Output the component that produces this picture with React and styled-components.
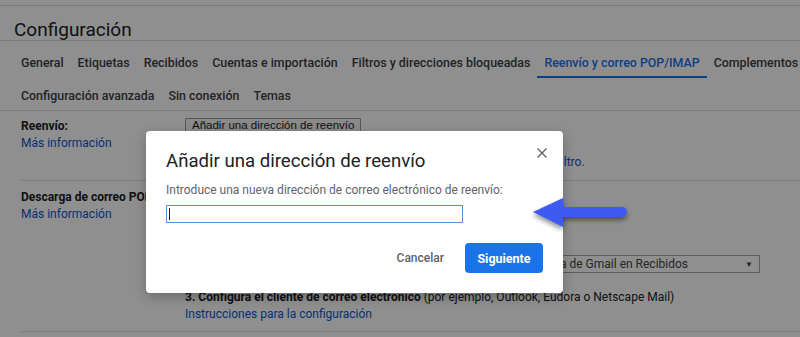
import React from "react";
import styled, { createGlobalStyle } from "styled-components";

const GlobalStyle = createGlobalStyle`
  html, body {
    margin: 0;
    padding: 0;
    background: #fff;
    overflow: hidden;
  }
  body {
    font-family: Roboto, "Liberation Sans", Arial, sans-serif;
    color: #202124;
    font-size: 12px;
  }
`;

const Page = styled.div`
  width: 800px;
  height: 337px;
  position: relative;
  overflow: hidden;
`;

const TopStrip = styled.div`
  height: 5px;
  border-bottom: 1px solid #dadce0;
`;

const Header = styled.h1`
  margin: 0;
  height: 35px;
  padding: 14px 0 0 14px;
  font-family: Roboto, sans-serif;
  font-size: 19px;
  font-weight: 400;
  line-height: 19px;
  color: #202124;
  border-bottom: 1px solid #dadce0;
  box-sizing: border-box;
`;

const TabBar = styled.nav`
  padding-left: 14px;
  border-bottom: 1px solid #dadce0;
`;

const TabRow = styled.div`
  display: flex;
  height: ${(p) => p.$height}px;
`;

const Tab = styled.a`
  box-sizing: border-box;
  padding: ${(p) => p.$top}px 7px 0;
  font-size: 12.4px;
  font-weight: 500;
  line-height: 16px;
  white-space: nowrap;
  color: ${(p) => (p.$active ? "#1a73e8" : "#3c4043")};
  border-bottom: 2px solid ${(p) => (p.$active ? "#1a73e8" : "transparent")};
  height: 100%;
`;

const Section = styled.div`
  display: grid;
  grid-template-columns: 164px 1fr;
  margin-left: 21px;
  height: ${(p) => p.$height}px;
  border-bottom: 1px solid #dadce0;
  box-sizing: border-box;
  padding-top: ${(p) => p.$top}px;
`;

const Label = styled.div`
  font-weight: 700;
  line-height: 17px;
`;

const Link = styled.a`
  display: ${(p) => (p.$inline ? "inline" : "block")};
  color: #1155cc;
  line-height: 17px;
`;

const Body = styled.div`
  display: flex;
  flex-direction: column;
  min-width: 0;
  line-height: 17px;
`;

const Line = styled.div`
  line-height: 17px;
  margin-top: ${(p) => p.$gap || 0}px;
  white-space: nowrap;
`;

const Strong = styled.span`
  font-weight: 700;
`;

const SmallButton = styled.button`
  align-self: flex-start;
  height: 15px;
  padding: 0 6px;
  font-family: Arial, "Liberation Sans", sans-serif;
  font-size: 11.5px;
  line-height: 13px;
  color: #202124;
  background: #f6f6f6;
  border: 1px solid #9a9a9a;
  border-radius: 1px;
`;

const OptionRow = styled.div`
  display: flex;
  align-items: center;
  gap: 6px;
  height: 20px;
  white-space: nowrap;
`;

const Radio = styled.span`
  width: 11px;
  height: 11px;
  border-radius: 50%;
  border: 1px solid #888;
  box-sizing: border-box;
`;

const SelectRow = styled.div`
  display: flex;
  align-items: center;
  gap: 8px;
  height: 18px;
  margin-top: 9px;
  padding-right: 40px;
  white-space: nowrap;
`;

const SelectLabel = styled.span`
  flex: 1;
  min-width: 0;
  overflow: hidden;
  font-weight: 700;
`;

const FakeSelect = styled.div`
  flex: 0 0 297px;
  height: 18px;
  box-sizing: border-box;
  border: 1px solid #a8a8a8;
  display: flex;
  align-items: center;
  justify-content: space-between;
  padding: 0 6px 0 5px;
  font-size: 12px;
  color: #444;
  background: #fff;
`;

const Caret = styled.span`
  font-size: 8px;
  color: #444;
`;

const Scrim = styled.div`
  position: absolute;
  inset: 0;
  background: rgba(0, 0, 0, 0.44);
`;

const Dialog = styled.div`
  position: absolute;
  left: 146px;
  top: 131px;
  width: 417px;
  height: 162px;
  box-sizing: border-box;
  padding: 18px 20px 20px;
  background: #fff;
  border-radius: 4px;
  box-shadow: 0 4px 12px rgba(0, 0, 0, 0.25);
  display: flex;
  flex-direction: column;
`;

const DialogHead = styled.div`
  display: flex;
  justify-content: space-between;
  align-items: flex-start;
`;

const DialogTitle = styled.h2`
  margin: 0;
  font-family: Roboto, sans-serif;
  font-size: 18.6px;
  font-weight: 400;
  line-height: 24px;
  color: #202124;
`;

const CloseButton = styled.button`
  margin: -1px -4px 0 0;
  padding: 0;
  width: 10px;
  height: 10px;
  border: 0;
  background: none;
  display: flex;
`;

const FieldLabel = styled.div`
  margin-top: 9px;
  font-size: 12px;
  line-height: 16px;
  color: #5f6368;
`;

const InputBox = styled.div`
  margin-top: 7px;
  width: 297px;
  height: 18px;
  box-sizing: border-box;
  border: 1px solid #5b8fe0;
  display: flex;
  align-items: center;
  padding-left: 2px;
`;

const TextCaret = styled.span`
  width: 1px;
  height: 12px;
  background: #202124;
`;

const DialogFooter = styled.div`
  margin-top: auto;
  display: flex;
  justify-content: flex-end;
  align-items: center;
  gap: 21px;
`;

const TextButton = styled.button`
  border: 0;
  background: none;
  padding: 0;
  font-family: Roboto, sans-serif;
  font-size: 12px;
  font-weight: 500;
  color: #5f6368;
`;

const PrimaryButton = styled.button`
  width: 78px;
  height: 30px;
  border: 0;
  border-radius: 4px;
  background: #1a73e8;
  color: #fff;
  font-family: Roboto, sans-serif;
  font-size: 12.5px;
  font-weight: 700;
`;

const Arrow = styled.svg`
  position: absolute;
  left: 525px;
  top: 190px;
  overflow: visible;
`;

const tabsTop = [
  "General",
  "Etiquetas",
  "Recibidos",
  "Cuentas e importación",
  "Filtros y direcciones bloqueadas",
  "Reenvío y correo POP/IMAP",
  "Complementos",
];
const tabsBottom = ["Configuración avanzada", "Sin conexión", "Temas"];

export default function App() {
  return (
    <Page>
      <GlobalStyle />
      <TopStrip />
      <Header>Configuración</Header>
      <TabBar>
        <TabRow $height={37}>
          {tabsTop.map((t) => (
            <Tab key={t} $top={14} $active={t.startsWith("Reenvío")}>
              {t}
            </Tab>
          ))}
        </TabRow>
        <TabRow $height={32}>
          {tabsBottom.map((t) => (
            <Tab key={t} $top={10}>
              {t}
            </Tab>
          ))}
        </TabRow>
      </TabBar>

      <Section $height={70} $top={7}>
        <div>
          <Label>Reenvío:</Label>
          <Link>Más información</Link>
        </div>
        <Body>
          <SmallButton>Añadir una dirección de reenvío</SmallButton>
          <Line $gap={21}>
            Consejo: también puedes reenviar solo algunos mensajes{" "}
            <Link $inline>creando un filtro.</Link>
          </Line>
        </Body>
      </Section>

      <Section $height={151} $top={8}>
        <div>
          <Label>Descarga de correo POP:</Label>
          <Link>Más información</Link>
        </div>
        <Body>
          <Line>
            <Strong>1. Estado:</Strong> POP está inhabilitado
          </Line>
          <OptionRow>
            <Radio /> Habilitar POP para todos los mensajes
          </OptionRow>
          <OptionRow>
            <Radio /> Habilitar POP para los mensajes que se reciban a partir de ahora
          </OptionRow>
          <SelectRow>
            <SelectLabel>2. Cuando se accede a los mensajes a través de POP</SelectLabel>
            <FakeSelect>
              <span>conservar la copia de Gmail en Recibidos</span>
              <Caret>▼</Caret>
            </FakeSelect>
          </SelectRow>
          <Line $gap={16}>
            <Strong>3. Configura el cliente de correo electrónico</Strong> (por
            ejemplo, Outlook, Eudora o Netscape Mail)
          </Line>
          <Link>Instrucciones para la configuración</Link>
        </Body>
      </Section>

      <Scrim />

      <Dialog>
        <DialogHead>
          <DialogTitle>Añadir una dirección de reenvío</DialogTitle>
          <CloseButton aria-label="Cerrar">
            <svg width="10" height="10" viewBox="0 0 10 10">
              <path d="M0.5 0.5 L9.5 9.5 M9.5 0.5 L0.5 9.5" stroke="#5f6368" strokeWidth="1.4" />
            </svg>
          </CloseButton>
        </DialogHead>
        <FieldLabel>
          Introduce una nueva dirección de correo electrónico de reenvío:
        </FieldLabel>
        <InputBox>
          <TextCaret />
        </InputBox>
        <DialogFooter>
          <TextButton>Cancelar</TextButton>
          <PrimaryButton>Siguiente</PrimaryButton>
        </DialogFooter>
      </Dialog>

      <Arrow width="112" height="48" viewBox="0 0 112 48">
        <defs>
          <filter id="arrowShadow" x="-20%" y="-30%" width="140%" height="180%">
            <feDropShadow dx="0" dy="3" stdDeviation="2.5" floodColor="#000" floodOpacity="0.45" />
          </filter>
        </defs>
        <path
          d="M8 22 L38 8 L38 17 L97 17 A5 5 0 0 1 97 27 L38 27 L38 37 Z"
          fill="#3d5af1"
          filter="url(#arrowShadow)"
        />
      </Arrow>
    </Page>
  );
}
